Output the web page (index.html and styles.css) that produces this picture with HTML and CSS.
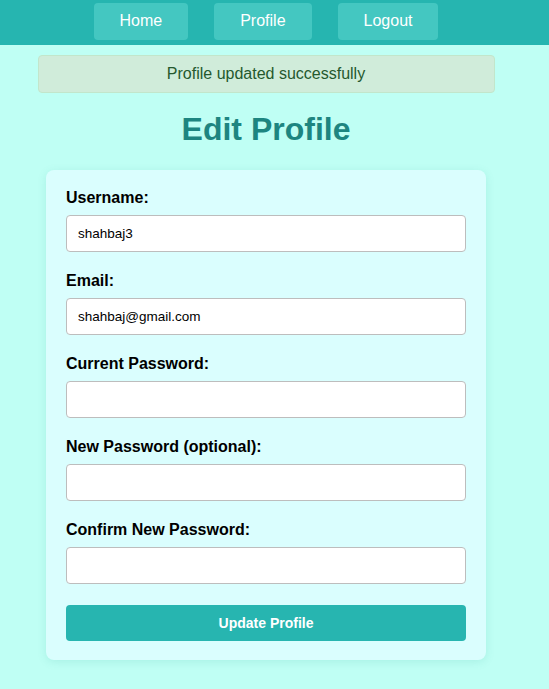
FILE: index.html
```html
<!DOCTYPE html>
<html lang="en">
<head>
<meta charset="utf-8">
<title>Edit Profile</title>
<link rel="stylesheet" href="styles.css">
</head>
<body>
<nav class="navbar">
  <a class="nav-btn" href="#">Home</a>
  <a class="nav-btn" href="#">Profile</a>
  <a class="nav-btn" href="#">Logout</a>
</nav>
<main class="page">
  <div class="alert">Profile updated successfully</div>
  <h1 class="title">Edit Profile</h1>
  <form class="card">
    <div class="group">
      <label class="label">Username:</label>
      <input class="input" type="text" value="shahbaj3">
    </div>
    <div class="group">
      <label class="label">Email:</label>
      <input class="input" type="email" value="shahbaj@gmail.com">
    </div>
    <div class="group">
      <label class="label">Current Password:</label>
      <input class="input" type="password">
    </div>
    <div class="group">
      <label class="label">New Password (optional):</label>
      <input class="input" type="password">
    </div>
    <div class="group">
      <label class="label">Confirm New Password:</label>
      <input class="input" type="password">
    </div>
    <button class="submit" type="button">Update Profile</button>
  </form>
</main>
</body>
</html>
```

FILE: styles.css
```css
* { box-sizing: border-box; }
html, body {
  margin: 0;
  padding: 0;
  background: #bffff4;
  font-family: "Liberation Sans", Arial, Helvetica, sans-serif;
}
.navbar {
  background: #26b5b0;
  height: 45px;
  padding: 3px 17px 0 0;
  display: flex;
  justify-content: center;
  align-items: flex-start;
  gap: 26px;
}
.nav-btn {
  display: block;
  background: #44c7c1;
  color: #ffffff;
  text-decoration: none;
  font-size: 16px;
  line-height: 18px;
  padding: 9px 26px 10px;
  border-radius: 4px;
}
.page {
  padding: 10px 17px 40px 0;
}
.alert {
  width: 457px;
  margin: 0 auto;
  background: #d0ecda;
  border: 1px solid #c2e6cb;
  border-radius: 4px;
  color: #25592e;
  font-size: 16px;
  line-height: 18px;
  padding: 9px 10px;
  text-align: center;
}
.title {
  margin: 18px 0 22px;
  text-align: center;
  font-size: 32px;
  line-height: 37px;
  font-weight: bold;
  color: #1d8580;
}
.card {
  width: 440px;
  margin: 0 auto;
  background: #dafefe;
  border-radius: 8px;
  padding: 19px 20px 19px;
  box-shadow: 0 2px 10px rgba(0, 128, 120, 0.12);
}
.group {
  margin-bottom: 20px;
}
.label {
  display: block;
  font-weight: bold;
  font-size: 16px;
  line-height: 18px;
  color: #000;
  margin-bottom: 8px;
}
.input {
  display: block;
  width: 100%;
  height: 37px;
  border: 1px solid #bdbdbd;
  border-radius: 4px;
  background: #fff;
  padding: 0 11px;
  font-family: "Liberation Sans", Arial, sans-serif;
  font-size: 13.5px;
  color: #000;
}
.submit {
  display: block;
  width: 100%;
  height: 36px;
  border: none;
  border-radius: 4px;
  background: #27b5b0;
  color: #fff;
  font-family: "Liberation Sans", Arial, sans-serif;
  font-weight: bold;
  font-size: 14px;
  margin-top: 21px;
}
```
